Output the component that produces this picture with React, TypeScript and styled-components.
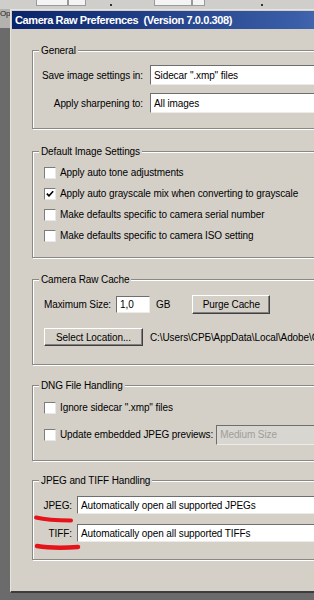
import styled, { createGlobalStyle } from "styled-components";

const GlobalStyle = createGlobalStyle`
  html, body {
    margin: 0;
    padding: 0;
    background: #6b6b6b;
    overflow: hidden;
  }
  body {
    font-family: "Liberation Sans", Arial, sans-serif;
    font-size: 10px;
    letter-spacing: -0.1px;
    color: #000;
  }
`;

const Screen = styled.div`
  width: 314px;
  height: 600px;
  overflow: hidden;
  display: grid;
  grid-template-columns: 10px 1fr;
  grid-template-rows: 9px 1fr;
  background: #6b6b6b;
`;

const Toolbar = styled.div`
  grid-column: 1 / 3;
  background: #cfcecb;
  display: flex;
  align-items: flex-start;
  padding-left: 36px;
  overflow: hidden;
`;

const ToolField = styled.div<{ $w: number; $ml?: number }>`
  width: ${(p) => p.$w}px;
  height: 5px;
  margin-left: ${(p) => p.$ml ?? 0}px;
  background: #f4f4f4;
  border: 1px solid #9a9a9a;
  border-top: none;
`;

const ToolTick = styled.div<{ $ml: number }>`
  width: 2px;
  height: 2px;
  margin-top: 4px;
  margin-left: ${(p) => p.$ml}px;
  background: #333;
`;

const SideStrip = styled.div`
  display: flex;
  flex-direction: column;
`;

const SideCell = styled.div`
  height: 19px;
  background: #b4b2ae;
  font-size: 8px;
  line-height: 10px;
  color: #222;
  overflow: hidden;
  white-space: nowrap;
`;

const Dialog = styled.div`
  width: 520px;
  height: 580px;
  background: #d4d0c8;
  border-top: 1px solid #e6e4de;
  border-left: 1px solid #e6e4de;
  border-bottom: 2px solid #3c3c3c;
  padding: 1px 0 0 1px;
  overflow: hidden;
  display: flex;
  flex-direction: column;
`;

const TitleBar = styled.div`
  height: 18px;
  display: flex;
  align-items: center;
  padding-left: 3px;
  background: linear-gradient(90deg, #0a246a 0%, #3a5ea8 55%, #a6caf0 100%);
  color: #fff;
  font-weight: bold;
  font-size: 11px;
  letter-spacing: -0.4px;
  white-space: pre;
`;

const Body = styled.div`
  display: flex;
  flex-direction: column;
  padding: 15px 0 0 20px;
`;

const Group = styled.fieldset<{ $mt?: number; $pt: number; $pb: number }>`
  margin: ${(p) => p.$mt ?? 0}px 0 0 0;
  padding: ${(p) => p.$pt}px 0 ${(p) => p.$pb}px 0;
  border: 1px solid #8a8884;
  box-shadow: inset 1px 1px 0 #fff, 1px 1px 0 #fff;
  min-width: 0;
`;

const Legend = styled.legend`
  margin-left: 6px;
  padding: 0 2px;
  line-height: 13px;
  background: #d4d0c8;
`;

const FieldRow = styled.div<{ $label: number; $gap: number }>`
  display: grid;
  grid-template-columns: ${(p) => p.$label}px 1fr;
  column-gap: ${(p) => p.$gap}px;
  align-items: center;
`;

const Rows = styled.div<{ $gap: number }>`
  display: flex;
  flex-direction: column;
  gap: ${(p) => p.$gap}px;
`;

const RightLabel = styled.span`
  text-align: right;
  white-space: nowrap;
  position: relative;
`;

const Field = styled.div<{ $h: number; $disabled?: boolean }>`
  height: ${(p) => p.$h}px;
  box-sizing: border-box;
  background: ${(p) => (p.$disabled ? "#d8d6d0" : "#fff")};
  color: ${(p) => (p.$disabled ? "#a09e9a" : "#000")};
  border-top: 1px solid #6e6e6e;
  border-left: 1px solid #6e6e6e;
  border-bottom: 1px solid #ecebe8;
  display: flex;
  align-items: center;
  padding-left: 3px;
  white-space: nowrap;
  overflow: hidden;
`;

const CheckRow = styled.label`
  height: 21px;
  display: flex;
  align-items: center;
  gap: 4px;
  padding-left: 11px;
  white-space: nowrap;
`;

const Box = styled.span`
  width: 12px;
  height: 12px;
  box-sizing: border-box;
  background: #fff;
  border-top: 1px solid #7c7c7c;
  border-left: 1px solid #7c7c7c;
  border-right: 1px solid #e8e8e8;
  border-bottom: 1px solid #e8e8e8;
  display: flex;
  align-items: center;
  justify-content: center;
  flex-shrink: 0;
`;

const CacheRow = styled.div<{ $h: number; $mt?: number }>`
  height: ${(p) => p.$h}px;
  margin-top: ${(p) => p.$mt ?? 0}px;
  display: flex;
  align-items: center;
  padding-left: 11px;
  white-space: nowrap;
`;

const SizeInput = styled.div`
  width: 34px;
  height: 17px;
  box-sizing: border-box;
  margin-left: 5px;
  background: #fff;
  border-top: 1px solid #6e6e6e;
  border-left: 1px solid #6e6e6e;
  border-bottom: 1px solid #ecebe8;
  border-right: 1px solid #ecebe8;
  display: flex;
  align-items: center;
  padding-left: 3px;
`;

const Unit = styled.span`
  margin-left: 6px;
`;

const Button = styled.div<{ $w: number; $h: number; $ml?: number }>`
  width: ${(p) => p.$w}px;
  height: ${(p) => p.$h}px;
  margin-left: ${(p) => p.$ml ?? 0}px;
  box-sizing: border-box;
  background: #d4d0c8;
  border: 1px solid;
  border-color: #fff #404040 #404040 #fff;
  box-shadow: inset -1px -1px 0 #808080;
  display: flex;
  align-items: center;
  justify-content: center;
`;

const PathText = styled.span`
  margin-left: 7px;
`;

const CheckWithSelect = styled.div`
  display: flex;
  align-items: center;
`;

const PreviewSelect = styled(Field)`
  width: 160px;
  margin-left: 3px;
`;

const Mark = styled.svg<{ $l: number; $t: number }>`
  position: absolute;
  left: ${(p) => p.$l}px;
  top: ${(p) => p.$t}px;
  overflow: visible;
`;

const checks = [
  { text: "Apply auto tone adjustments", on: false },
  { text: "Apply auto grayscale mix when converting to grayscale", on: true },
  { text: "Make defaults specific to camera serial number", on: false },
  { text: "Make defaults specific to camera ISO setting", on: false },
];

function Check({ on }: { on?: boolean }) {
  return (
    <Box>
      {on && (
        <svg width="8" height="8" viewBox="0 0 8 8">
          <path d="M0.8 3.6 L3 5.9 L7.2 1.3" fill="none" stroke="#000" strokeWidth="1.6" />
        </svg>
      )}
    </Box>
  );
}

function App() {
  return (
    <>
      <GlobalStyle />
      <Screen>
        <Toolbar>
          <ToolField $w={30} />
          <ToolField $w={16} />
          <ToolTick $ml={24} />
          <ToolField $w={36} $ml={42} />
          <ToolField $w={11} />
          <ToolTick $ml={56} />
        </Toolbar>
        <SideStrip>
          <SideCell>Op</SideCell>
        </SideStrip>
        <Dialog>
          <TitleBar>Camera Raw Preferences  (Version 7.0.0.308)</TitleBar>
          <Body>
            <Group $pt={8} $pb={15}>
              <Legend>General</Legend>
              <Rows $gap={8}>
                <FieldRow $label={110} $gap={7}>
                  <RightLabel>Save image settings in:</RightLabel>
                  <Field $h={20}>Sidecar ".xmp" files</Field>
                </FieldRow>
                <FieldRow $label={110} $gap={7}>
                  <RightLabel>Apply sharpening to:</RightLabel>
                  <Field $h={20}>All images</Field>
                </FieldRow>
              </Rows>
            </Group>

            <Group $mt={16} $pt={4} $pb={11}>
              <Legend>Default Image Settings</Legend>
              {checks.map((c) => (
                <CheckRow key={c.text}>
                  <Check on={c.on} />
                  {c.text}
                </CheckRow>
              ))}
            </Group>

            <Group $mt={15} $pt={8} $pb={17}>
              <Legend>Camera Raw Cache</Legend>
              <CacheRow $h={20}>
                Maximum Size:
                <SizeInput>1,0</SizeInput>
                <Unit>GB</Unit>
                <Button $w={78} $h={19} $ml={22}>
                  Purge Cache
                </Button>
              </CacheRow>
              <CacheRow $h={20} $mt={13}>
                <Button $w={99} $h={18}>
                  Select Location...
                </Button>
                <PathText>C:\Users\СРБ\AppData\Local\Adobe\CameraRaw\Cache\</PathText>
              </CacheRow>
            </Group>

            <Group $mt={14} $pt={5} $pb={15}>
              <Legend>DNG File Handling</Legend>
              <Rows $gap={6}>
                <CheckRow as="div">
                  <Check />
                  Ignore sidecar ".xmp" files
                </CheckRow>
                <CheckWithSelect>
                  <CheckRow as="div">
                    <Check />
                    Update embedded JPEG previews:
                  </CheckRow>
                  <PreviewSelect $h={20} $disabled>
                    Medium Size
                  </PreviewSelect>
                </CheckWithSelect>
              </Rows>
            </Group>

            <Group $mt={13} $pt={9} $pb={17}>
              <Legend>JPEG and TIFF Handling</Legend>
              <Rows $gap={10}>
                <FieldRow $label={39} $gap={5}>
                  <RightLabel>
                    JPEG:
                    <Mark $l={1} $t={15} width="39" height="8" viewBox="0 0 39 8">
                      <path
                        d="M2 2.5 C10 4.5 22 5.5 37 5.5"
                        fill="none"
                        stroke="#e6131b"
                        strokeWidth="4"
                        strokeLinecap="round"
                      />
                    </Mark>
                  </RightLabel>
                  <Field $h={18}>Automatically open all supported JPEGs</Field>
                </FieldRow>
                <FieldRow $label={39} $gap={5}>
                  <RightLabel>
                    TIFF:
                    <Mark $l={2} $t={15} width="45" height="8" viewBox="0 0 45 8">
                      <path
                        d="M2 3 C14 5 28 5 43 4"
                        fill="none"
                        stroke="#e6131b"
                        strokeWidth="4.5"
                        strokeLinecap="round"
                      />
                    </Mark>
                  </RightLabel>
                  <Field $h={18}>Automatically open all supported TIFFs</Field>
                </FieldRow>
              </Rows>
            </Group>
          </Body>
        </Dialog>
      </Screen>
    </>
  );
}

export default App;
